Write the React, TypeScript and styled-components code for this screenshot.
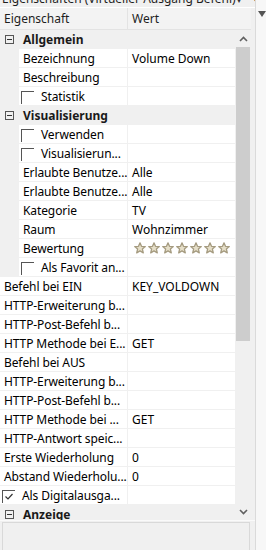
import React from "react";
import styled, { createGlobalStyle } from "styled-components";

const Global = createGlobalStyle`
  html, body { margin: 0; padding: 0; background: #f0f0f0; }
  body { font-family: "Noto Sans", "Liberation Sans", sans-serif; font-size: 12px; color: #000; }
`;

const Root = styled.div`
  width: 266px;
  height: 550px;
  overflow: hidden;
  display: flex;
  flex-direction: column;
  background: #f0f0f0;
`;

const TitleBar = styled.div`
  height: 7px;
  overflow: hidden;
  display: flex;
  align-items: flex-end;
  border-bottom: 1px solid #ffffff;
  width: 256px;
`;

const TitleText = styled.div`
  flex: 1;
  line-height: 16px;
  white-space: nowrap;
  padding-left: 2px;
  color: #1e1e1e;
`;

const TitleIcons = styled.div`
  display: flex;
  gap: 12px;
  padding-right: 4px;
  line-height: 16px;
  color: #333;
`;

const Main = styled.div`
  flex: 1;
  display: flex;
  min-height: 0;
`;

const Panel = styled.div`
  width: 256px;
  display: flex;
  flex-direction: column;
`;

const SidePanel = styled.div`
  flex: 1;
  margin-top: -8px;
  border-left: 1px solid #dadada;
  background: #f7f7f7;
  padding: 4px 0 0 2px;
`;

const HeaderRow = styled.div`
  height: 21px;
  display: flex;
  width: 251px;
  background: #f3f3f3;
  border-bottom: 1px solid #e3e3e3;
`;

const HeaderCell = styled.div<{ $w?: number }>`
  ${(p) => (p.$w ? `width: ${p.$w}px;` : "flex: 1;")}
  display: flex;
  align-items: center;
  padding-left: 4px;
  box-sizing: border-box;
  color: #1e1e1e;
  ${(p) => (p.$w ? "border-right: 1px solid #e3e3e3;" : "")}
`;

const Body = styled.div`
  height: 490px;
  display: flex;
  overflow: hidden;
  border-bottom: 1px solid #fafafa;
`;

const Grid = styled.div`
  width: 235px;
  display: flex;
  flex-direction: column;
`;

const Row = styled.div<{ $kind: "cat" | "child" | "top" }>`
  height: 19px;
  flex: none;
  display: flex;
  box-sizing: border-box;
  background: ${(p) => (p.$kind === "cat" ? "#f0f0f0" : "#ffffff")};
  border-left: ${(p) => (p.$kind === "child" ? "19px solid #f0f0f0" : "0")};
`;

const NameCell = styled.div<{ $w: number }>`
  width: ${(p) => p.$w}px;
  flex: none;
  display: flex;
  align-items: center;
  box-sizing: border-box;
  padding-left: 4px;
  gap: 7px;
  white-space: nowrap;
  overflow: hidden;
  letter-spacing: -0.1px;
  border-right: 1px solid #f0f0f0;
  border-bottom: 1px solid #f0f0f0;
`;

const ValueCell = styled.div`
  flex: 1;
  display: flex;
  align-items: center;
  padding-left: 4px;
  white-space: nowrap;
  overflow: hidden;
  border-bottom: 1px solid #f0f0f0;
`;

const CatLabel = styled.div`
  display: flex;
  align-items: center;
  gap: 9px;
  padding-left: 5px;
  font-weight: 700;
  color: #1a1a1a;
`;

const Expander = styled.span`
  width: 9px;
  height: 9px;
  box-sizing: border-box;
  border: 1px solid #555;
  position: relative;
  flex: none;
  &::after {
    content: "";
    position: absolute;
    left: 1px;
    right: 1px;
    top: 3px;
    height: 1px;
    background: #333;
  }
`;

const Check = styled.span`
  width: 13px;
  height: 13px;
  box-sizing: border-box;
  border-top: 1px solid #555;
  border-left: 1px solid #555;
  flex: none;
  margin-left: -2px;
  margin-top: 2px;
  display: flex;
  align-items: center;
  justify-content: center;
`;

const Stars = styled.div`
  display: flex;
  gap: 2px;
  margin-left: 2px;
`;

const Scrollbar = styled.div`
  width: 16px;
  display: flex;
  flex-direction: column;
  background: #f0f0f0;
`;

const ScrollBtn = styled.div`
  height: 17px;
  display: flex;
  align-items: center;
  justify-content: center;
  flex: none;
`;

const Thumb = styled.div`
  height: 294px;
  margin: 0 1px 0 1px;
  background: #cdcdcd;
  flex: none;
`;

const Track = styled.div`
  flex: 1;
`;

const Description = styled.div`
  flex: 1;
  margin: 1px 5px 0 2px;
  border: 1px solid #d9d9d9;
  border-bottom: 0;
  background: #f0f0f0;
`;

const Star = () => (
  <svg width="12" height="12" viewBox="0 0 12 12" style={{ flex: "none" }}>
    <path
      d="M6 0.8 L7.5 4.3 L11.3 4.6 L8.4 7.1 L9.3 10.9 L6 8.9 L2.7 10.9 L3.6 7.1 L0.7 4.6 L4.5 4.3 Z"
      fill="#e6dfc9"
      stroke="#a59b80"
      strokeWidth="1.3"
      strokeLinejoin="round"
    />
  </svg>
);

const CheckMark = () => (
  <svg width="10" height="9" viewBox="0 0 10 9">
    <path d="M1.5 4.5 L4 7 L8.5 2" fill="none" stroke="#333" strokeWidth="1.2" />
  </svg>
);

const Chevron = ({ down }: { down?: boolean }) => (
  <svg width="9" height="6" viewBox="0 0 9 6">
    <path
      d={down ? "M1 1 L4.5 4.5 L8 1" : "M1 5 L4.5 1.5 L8 5"}
      fill="none"
      stroke="#606060"
      strokeWidth="1.6"
    />
  </svg>
);

type Item =
  | { kind: "cat"; label: string }
  | { kind: "child" | "top"; label: string; value?: string; check?: "off" | "on"; stars?: boolean };

const items: Item[] = [
  { kind: "cat", label: "Allgemein" },
  { kind: "child", label: "Bezeichnung", value: "Volume Down" },
  { kind: "child", label: "Beschreibung" },
  { kind: "child", label: "Statistik", check: "off" },
  { kind: "cat", label: "Visualisierung" },
  { kind: "child", label: "Verwenden", check: "off" },
  { kind: "child", label: "Visualisierun...", check: "off" },
  { kind: "child", label: "Erlaubte Benutze...", value: "Alle" },
  { kind: "child", label: "Erlaubte Benutze...", value: "Alle" },
  { kind: "child", label: "Kategorie", value: "TV" },
  { kind: "child", label: "Raum", value: "Wohnzimmer" },
  { kind: "child", label: "Bewertung", stars: true },
  { kind: "child", label: "Als Favorit an...", check: "off" },
  { kind: "top", label: "Befehl bei EIN", value: "KEY_VOLDOWN" },
  { kind: "top", label: "HTTP-Erweiterung b..." },
  { kind: "top", label: "HTTP-Post-Befehl b..." },
  { kind: "top", label: "HTTP Methode bei E...", value: "GET" },
  { kind: "top", label: "Befehl bei AUS" },
  { kind: "top", label: "HTTP-Erweiterung b..." },
  { kind: "top", label: "HTTP-Post-Befehl b..." },
  { kind: "top", label: "HTTP Methode bei ...", value: "GET" },
  { kind: "top", label: "HTTP-Antwort speic..." },
  { kind: "top", label: "Erste Wiederholung", value: "0" },
  { kind: "top", label: "Abstand Wiederholu...", value: "0" },
  { kind: "top", label: "Als Digitalausga...", check: "on" },
  { kind: "cat", label: "Anzeige" },
];

export default function App() {
  return (
    <Root>
      <Global />
      <TitleBar>
        <TitleText>Eigenschaften (Virtueller Ausgang Befehl)</TitleText>
        <TitleIcons>
          <span>▾</span>
          <span>×</span>
        </TitleIcons>
      </TitleBar>
      <Main>
        <Panel>
          <HeaderRow>
            <HeaderCell $w={128}>Eigenschaft</HeaderCell>
            <HeaderCell>Wert</HeaderCell>
          </HeaderRow>
          <Body>
            <Grid>
              {items.map((it, i) =>
                it.kind === "cat" ? (
                  <Row key={i} $kind="cat">
                    <CatLabel>
                      <Expander />
                      {it.label}
                    </CatLabel>
                  </Row>
                ) : (
                  <Row key={i} $kind={it.kind}>
                    <NameCell $w={it.kind === "child" ? 109 : 128}>
                      {it.check && <Check>{it.check === "on" && <CheckMark />}</Check>}
                      {it.label}
                    </NameCell>
                    <ValueCell>
                      {it.stars ? (
                        <Stars>
                          {Array.from({ length: 7 }).map((_, k) => (
                            <Star key={k} />
                          ))}
                        </Stars>
                      ) : (
                        it.value
                      )}
                    </ValueCell>
                  </Row>
                )
              )}
            </Grid>
            <Scrollbar>
              <ScrollBtn>
                <Chevron />
              </ScrollBtn>
              <Thumb />
              <Track />
              <ScrollBtn>
                <Chevron down />
              </ScrollBtn>
            </Scrollbar>
          </Body>
          <Description />
        </Panel>
        <SidePanel>
          <svg width="8" height="6" viewBox="0 0 8 6">
            <path d="M0 0 H8 L4 6 Z" fill="#555" />
          </svg>
        </SidePanel>
      </Main>
    </Root>
  );
}
